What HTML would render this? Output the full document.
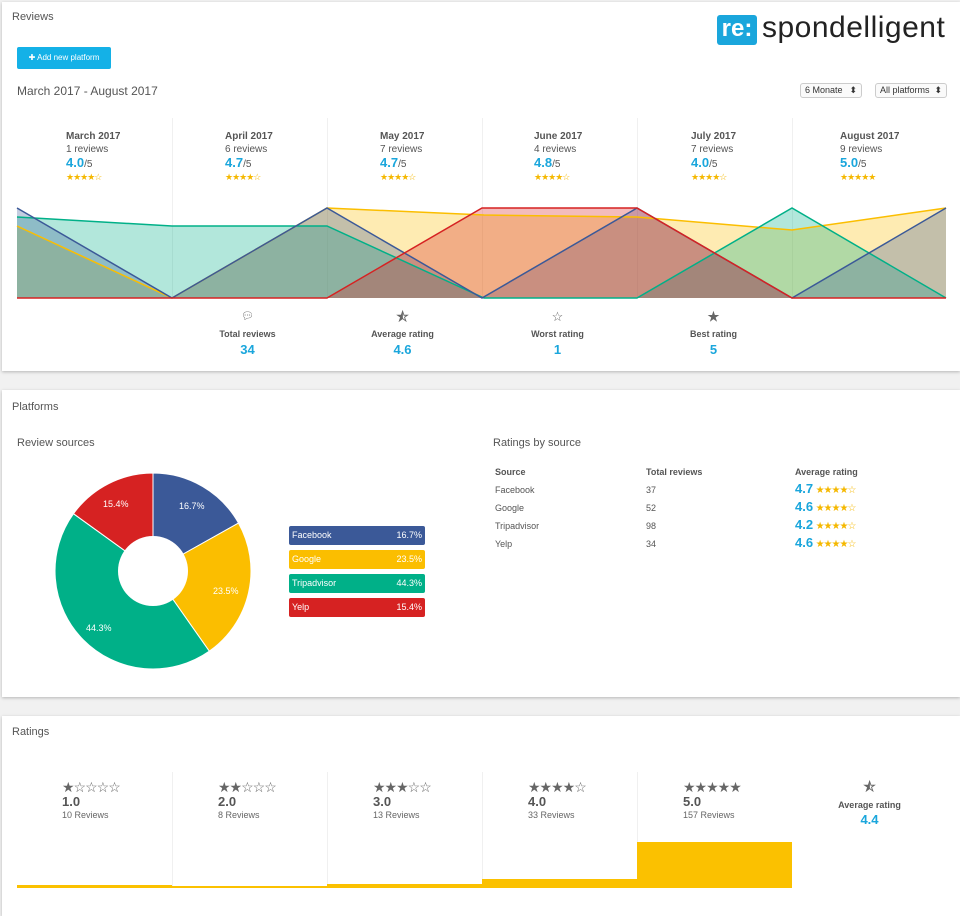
<!DOCTYPE html>
<html><head><meta charset="utf-8"><style>
*{box-sizing:border-box;margin:0;padding:0}
body{width:960px;height:903px;background:#f1f1f1;font-family:"Liberation Sans",sans-serif;color:#555;position:relative;overflow:hidden}
.card{position:absolute;left:2px;right:0;background:#fff;box-shadow:0 1px 3px rgba(0,0,0,.25)}
.abs{position:absolute}
.t{font-size:12px;color:#555}
.blue{color:#1aa6dc;font-weight:bold}
.mo{position:absolute;top:130px;width:155px;font-size:10px;line-height:13px}
.mo b{color:#555;font-size:10px}
.st{color:#f5b800;font-size:9px;letter-spacing:-1px}
.sel{position:absolute;top:83px;height:15px;border:1px solid #ccc;border-radius:3px;font-size:9px;padding:1px 4px;color:#333;background:#fafafa}
.kpi{position:absolute;top:310px;width:155px;text-align:center;font-size:9px;font-weight:bold;color:#555;line-height:12px}
.kpi .i{height:14px;line-height:14px;font-size:13px;color:#666;margin-bottom:4px}
.kpi .v{color:#1aa6dc;font-size:13px;line-height:16px;margin-top:2px}
.lg{position:absolute;left:289px;width:136px;height:19px;border-radius:2px;color:#fff;font-size:9px;line-height:19px;padding:0 3px}
.lg span{float:right}
.tb{position:absolute;font-size:9px;color:#555}
.rc{position:absolute;top:772px;width:155px;height:115px;border-left:1px solid #f0f0f0;padding-left:45px;padding-top:8px}
.rc .s{color:#666;font-size:14px;letter-spacing:-1px;line-height:14px}
.rc .n{font-size:13px;font-weight:bold;color:#555;line-height:16px}
.rc .r{font-size:9px;color:#666}
</style></head><body>
<div class="card" style="top:2px;height:369px"></div>
<div class="card" style="top:390px;height:307px"></div>
<div class="card" style="top:716px;height:200px"></div>

<div class="abs t" style="left:12px;top:11px;font-size:11px">Reviews</div>
<div class="abs" style="left:717px;top:15px;width:40px;height:30px;background:#1aa6dc;border-radius:3px;color:#fff;font-size:24px;line-height:28px;text-align:center;font-weight:bold">re:</div>
<div class="abs" style="left:762px;top:11px;font-size:30px;color:#222;letter-spacing:0.5px">spondelligent</div>
<div class="abs" style="left:17px;top:47px;width:94px;height:22px;background:#14b1e7;border-radius:2px;color:#fff;font-size:8px;line-height:22px;text-align:center">✚ Add new platform</div>
<div class="abs t" style="left:17px;top:84px;font-size:12px">March 2017 - August 2017</div>
<div class="sel" style="left:800px;width:62px">6 Monate <span style="float:right">⬍</span></div>
<div class="sel" style="left:875px;width:72px">All platforms <span style="float:right">⬍</span></div>

<div class="abs" style="left:172px;top:118px;width:1px;height:180px;background:#f0f0f0"></div>
<div class="abs" style="left:327px;top:118px;width:1px;height:180px;background:#f0f0f0"></div>
<div class="abs" style="left:482px;top:118px;width:1px;height:180px;background:#f0f0f0"></div>
<div class="abs" style="left:637px;top:118px;width:1px;height:180px;background:#f0f0f0"></div>
<div class="abs" style="left:792px;top:118px;width:1px;height:180px;background:#f0f0f0"></div>

<div class="mo" style="left:66px"><b>March 2017</b><br>1 reviews<br><span class="blue" style="font-size:13px">4.0</span>/5<br><span class="st">★★★★☆</span></div>
<div class="mo" style="left:225px"><b>April 2017</b><br>6 reviews<br><span class="blue" style="font-size:13px">4.7</span>/5<br><span class="st">★★★★☆</span></div>
<div class="mo" style="left:380px"><b>May 2017</b><br>7 reviews<br><span class="blue" style="font-size:13px">4.7</span>/5<br><span class="st">★★★★☆</span></div>
<div class="mo" style="left:534px"><b>June 2017</b><br>4 reviews<br><span class="blue" style="font-size:13px">4.8</span>/5<br><span class="st">★★★★☆</span></div>
<div class="mo" style="left:691px"><b>July 2017</b><br>7 reviews<br><span class="blue" style="font-size:13px">4.0</span>/5<br><span class="st">★★★★☆</span></div>
<div class="mo" style="left:840px"><b>August 2017</b><br>9 reviews<br><span class="blue" style="font-size:13px">5.0</span>/5<br><span class="st">★★★★★</span></div>

<svg class="abs" style="left:0;top:0" width="960" height="310">
<g stroke-width="1.5">
<polygon points="17,226 172,298 327,208 484,215 637,217 792,230 946,208 946,298 17,298" fill="rgba(251,190,0,.3)" stroke="none"/>
<polygon points="17,217 172,226 327,226 484,298 637,298 792,208 946,298 17,298" fill="rgba(0,176,136,.3)" stroke="none"/>
<polygon points="17,208 172,298 327,208 482,298 637,208 792,298 946,208 946,298 17,298" fill="rgba(59,89,152,.3)" stroke="none"/>
<polygon points="17,298 327,298 482,208 637,208 792,298 946,298" fill="rgba(214,34,34,.3)" stroke="none"/>
<polyline points="17,226 172,298 327,208 484,215 637,217 792,230 946,208" fill="none" stroke="#fbbe00"/>
<polyline points="17,217 172,226 327,226 484,298 637,298 792,208 946,298" fill="none" stroke="#00b088"/>
<polyline points="17,208 172,298 327,208 482,298 637,208 792,298 946,208" fill="none" stroke="#3b5998"/>
<polyline points="17,298 327,298 482,208 637,208 792,298 946,298" fill="none" stroke="#d62222"/>
</g>
</svg>

<div class="kpi" style="left:170px"><div class="i" style="font-size:10px;font-weight:normal">💬︎</div>Total reviews<div class="v">34</div></div>
<div class="kpi" style="left:325px"><div class="i">⯪</div>Average rating<div class="v">4.6</div></div>
<div class="kpi" style="left:480px"><div class="i" style="font-weight:normal">☆</div>Worst rating<div class="v">1</div></div>
<div class="kpi" style="left:636px"><div class="i">★</div>Best rating<div class="v">5</div></div>

<div class="abs t" style="left:12px;top:401px;font-size:11px">Platforms</div>
<div class="abs t" style="left:17px;top:437px;font-size:11px">Review sources</div>
<div class="abs t" style="left:493px;top:437px;font-size:11px">Ratings by source</div>

<svg class="abs" style="left:55px;top:473px" width="200" height="200">
<g transform="translate(98,98)" stroke="#fff" stroke-width="1">
<path d="M0,-98 A98,98 0 0 1 85.5,-47.9 L0,0Z" fill="#3b5998"/>
<path d="M85.5,-47.9 A98,98 0 0 1 56.3,80.2 L0,0Z" fill="#fbbe00"/>
<path d="M56.3,80.2 A98,98 0 0 1 -79.5,-57.3 L0,0Z" fill="#00b088"/>
<path d="M-79.5,-57.3 A98,98 0 0 1 0,-98 L0,0Z" fill="#d62222"/>
<circle r="35" fill="#fff" stroke="none"/>
</g>
<g fill="#fff" font-size="9" font-family="Liberation Sans">
<text x="124" y="36">16.7%</text><text x="158" y="121">23.5%</text><text x="31" y="158">44.3%</text><text x="48" y="34">15.4%</text>
</g>
</svg>

<div class="lg" style="top:526px;background:#3b5998">Facebook<span>16.7%</span></div>
<div class="lg" style="top:550px;background:#fbbe00">Google<span>23.5%</span></div>
<div class="lg" style="top:574px;background:#00b088">Tripadvisor<span>44.3%</span></div>
<div class="lg" style="top:598px;background:#d62222">Yelp<span>15.4%</span></div>

<div class="tb" style="left:495px;top:467px;font-weight:bold">Source</div>
<div class="tb" style="left:646px;top:467px;font-weight:bold">Total reviews</div>
<div class="tb" style="left:795px;top:467px;font-weight:bold">Average rating</div>
<div class="tb" style="left:495px;top:485px">Facebook</div><div class="tb" style="left:646px;top:485px">37</div>
<div class="tb" style="left:495px;top:503px">Google</div><div class="tb" style="left:646px;top:503px">52</div>
<div class="tb" style="left:495px;top:521px">Tripadvisor</div><div class="tb" style="left:646px;top:521px">98</div>
<div class="tb" style="left:495px;top:539px">Yelp</div><div class="tb" style="left:646px;top:539px">34</div>
<div class="tb" style="left:795px;top:481px"><span class="blue" style="font-size:13px">4.7</span> <span class="st" style="font-size:10px">★★★★☆</span></div>
<div class="tb" style="left:795px;top:499px"><span class="blue" style="font-size:13px">4.6</span> <span class="st" style="font-size:10px">★★★★☆</span></div>
<div class="tb" style="left:795px;top:517px"><span class="blue" style="font-size:13px">4.2</span> <span class="st" style="font-size:10px">★★★★☆</span></div>
<div class="tb" style="left:795px;top:535px"><span class="blue" style="font-size:13px">4.6</span> <span class="st" style="font-size:10px">★★★★☆</span></div>

<div class="abs t" style="left:12px;top:726px;font-size:11px">Ratings</div>
<div class="rc" style="left:17px;border-left:none"><div class="s">★☆☆☆☆</div><div class="n">1.0</div><div class="r">10 Reviews</div></div>
<div class="rc" style="left:172px"><div class="s">★★☆☆☆</div><div class="n">2.0</div><div class="r">8 Reviews</div></div>
<div class="rc" style="left:327px"><div class="s">★★★☆☆</div><div class="n">3.0</div><div class="r">13 Reviews</div></div>
<div class="rc" style="left:482px"><div class="s">★★★★☆</div><div class="n">4.0</div><div class="r">33 Reviews</div></div>
<div class="rc" style="left:637px"><div class="s">★★★★★</div><div class="n">5.0</div><div class="r">157 Reviews</div></div>
<div class="abs" style="left:792px;top:778px;width:155px;text-align:center;font-size:9px;font-weight:bold;color:#555"><div style="font-size:13px;color:#666">⯪</div>Average rating<div style="color:#1aa6dc;font-size:13px;margin-top:2px">4.4</div></div>
<div class="abs" style="left:17px;top:885px;width:155px;height:3px;background:#fbc100"></div>
<div class="abs" style="left:172px;top:886px;width:155px;height:2px;background:#fbc100"></div>
<div class="abs" style="left:327px;top:884px;width:155px;height:4px;background:#fbc100"></div>
<div class="abs" style="left:482px;top:879px;width:155px;height:9px;background:#fbc100"></div>
<div class="abs" style="left:637px;top:842px;width:155px;height:46px;background:#fbc100"></div>
</body></html>
